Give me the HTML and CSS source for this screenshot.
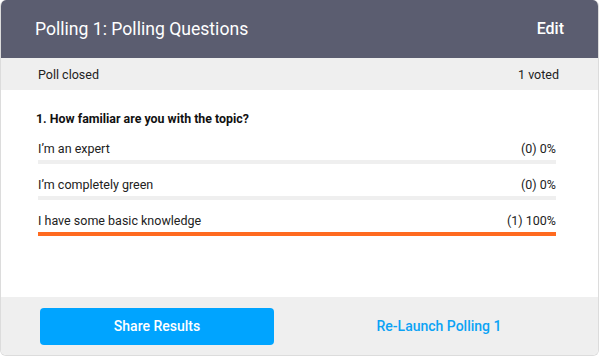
FILE: index.html
```html
<!DOCTYPE html>
<html>
<head>
<meta charset="utf-8">
<link rel="stylesheet" href="styles.css">
</head>
<body>
<div class="card">
  <div class="header">
    <span class="title">Polling 1: Polling Questions</span>
    <span class="edit">Edit</span>
  </div>
  <div class="status">
    <span>Poll closed</span>
    <span>1 voted</span>
  </div>
  <div class="content">
    <div class="question">1. How familiar are you with the topic?</div>
    <div class="options">
      <div class="option">
        <div class="option-line"><span>I’m an expert</span><span>(0) 0%</span></div>
        <div class="bar"><div class="fill" style="width:0%"></div></div>
      </div>
      <div class="option">
        <div class="option-line"><span>I’m completely green</span><span>(0) 0%</span></div>
        <div class="bar"><div class="fill" style="width:0%"></div></div>
      </div>
      <div class="option">
        <div class="option-line"><span>I have some basic knowledge</span><span>(1) 100%</span></div>
        <div class="bar"><div class="fill" style="width:100%"></div></div>
      </div>
    </div>
  </div>
  <div class="footer">
    <button class="share">Share Results</button>
    <a class="relaunch">Re-Launch Polling 1</a>
  </div>
</div>
</body>
</html>
```
FILE: styles.css
```css
* { box-sizing: border-box; }
html, body { margin: 0; padding: 0; background: #ffffff; }
body { font-family: Roboto, "Liberation Sans", sans-serif; color: #222; }
.card {
  width: 599px;
  height: 356px;
  border: 1px solid #dcdcdc;
  border-top: 0;
  border-radius: 6px;
  overflow: hidden;
  display: flex;
  flex-direction: column;
}
.header {
  height: 58px;
  margin: 0 -1px;
  background: #5b5d70;
  color: #ffffff;
  display: flex;
  align-items: center;
  justify-content: space-between;
  padding: 0 35px 1px 35px;
}
.title { font-size: 17.6px; font-weight: 400; }
.edit { font-size: 16px; font-weight: 500; }
.status {
  height: 32px;
  background: #efefef;
  display: flex;
  align-items: center;
  justify-content: space-between;
  padding: 0 39px 0 37px;
  font-size: 12.5px;
  color: #222;
}
.content {
  flex: 1;
  padding: 21px 42px 0 37px;
}
.question {
  margin-left: -2px;
  font-size: 12.4px;
  font-weight: 700;
  line-height: 16px;
  color: #111;
}
.options {
  margin-top: 14px;
  display: flex;
  flex-direction: column;
  gap: 13px;
}
.option-line {
  display: flex;
  justify-content: space-between;
  font-size: 12.5px;
  line-height: 16px;
  color: #222;
}
.bar {
  margin-top: 3px;
  height: 4px;
  background: #efefef;
}
.fill { height: 100%; background: #ff6a1f; }
.footer {
  height: 58px;
  background: #efefef;
  display: grid;
  grid-template-columns: 234px 1fr;
  align-items: center;
  padding: 0 0 0 39px;
}
.share {
  height: 37px;
  border: 0;
  border-radius: 4px;
  background: #00a4ff;
  color: #ffffff;
  font-family: Roboto, "Liberation Sans", sans-serif;
  font-size: 14px;
  font-weight: 500;
}
.relaunch {
  padding-left: 6px;
  text-align: center;
  color: #0ba3f5;
  font-size: 14px;
  font-weight: 500;
}
```
